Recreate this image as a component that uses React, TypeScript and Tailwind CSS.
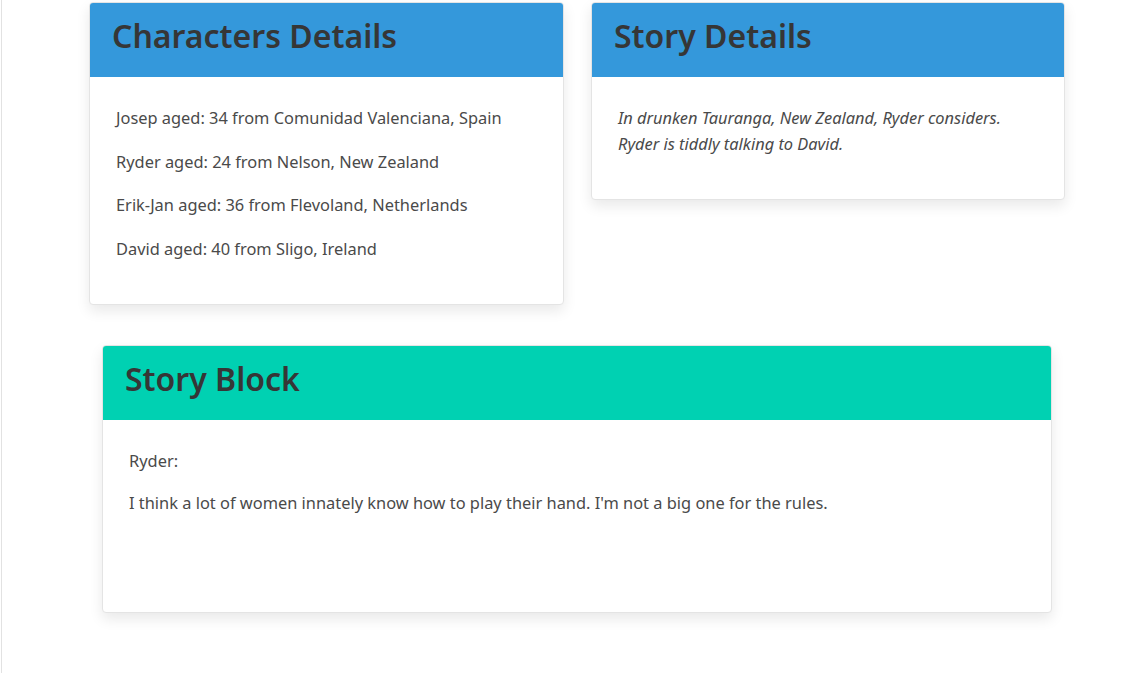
import React from "react";

const characters = [
  "Josep aged: 34 from Comunidad Valenciana, Spain",
  "Ryder aged: 24 from Nelson, New Zealand",
  "Erik-Jan aged: 36 from Flevoland, Netherlands",
  "David aged: 40 from Sligo, Ireland",
];

function Card({
  title,
  headerClass,
  className,
  children,
}: {
  title: string;
  headerClass: string;
  className?: string;
  children: React.ReactNode;
}) {
  return (
    <div
      className={`bg-white rounded-[4px] border border-[#e4e4e4] shadow-[0_6px_14px_rgba(10,10,10,0.09)] overflow-hidden ${className ?? ""}`}
    >
      <div className={`${headerClass} h-[74px] flex items-center px-[22px]`}>
        <h2 className="text-[32px] font-semibold text-[#363636] leading-none pb-[8px]">{title}</h2>
      </div>
      {children}
    </div>
  );
}

export default function App() {
  return (
    <div
      className="min-h-[673px] ml-px border-l border-[#e2e2e2] bg-white text-[#4a4a4a]"
      style={{ fontFamily: '"Noto Sans", "Open Sans", sans-serif' }}
    >
      <div className="flex gap-[27px] pl-[87px] pt-[2px]">
        <Card title="Characters Details" headerClass="bg-[#3498db]" className="w-[475px]">
          <div className="px-[26px] pt-[28px] pb-[24px] text-[16.4px]">
            {characters.map((c) => (
              <p key={c} className="leading-[26px] mb-[17.7px]">
                {c}
              </p>
            ))}
          </div>
        </Card>
        <Card title="Story Details" headerClass="bg-[#3498db]" className="w-[474px] self-start">
          <div className="px-[26px] pt-[28px] pb-[42px] text-[16.4px] italic leading-[26px]">
            <p>In drunken Tauranga, New Zealand, Ryder considers.</p>
            <p>Ryder is tiddly talking to David.</p>
          </div>
        </Card>
      </div>

      <Card title="Story Block" headerClass="bg-[#00d1b2]" className="w-[950px] ml-[100px] mt-[40px]">
        <div className="px-[26px] pt-[28px] pb-[96px] text-[16.4px]">
          <p className="leading-[26px] mb-[16px]">Ryder:</p>
          <p className="leading-[26px]">
            I think a lot of women innately know how to play their hand. I'm not a big one for the rules.
          </p>
        </div>
      </Card>
    </div>
  );
}
